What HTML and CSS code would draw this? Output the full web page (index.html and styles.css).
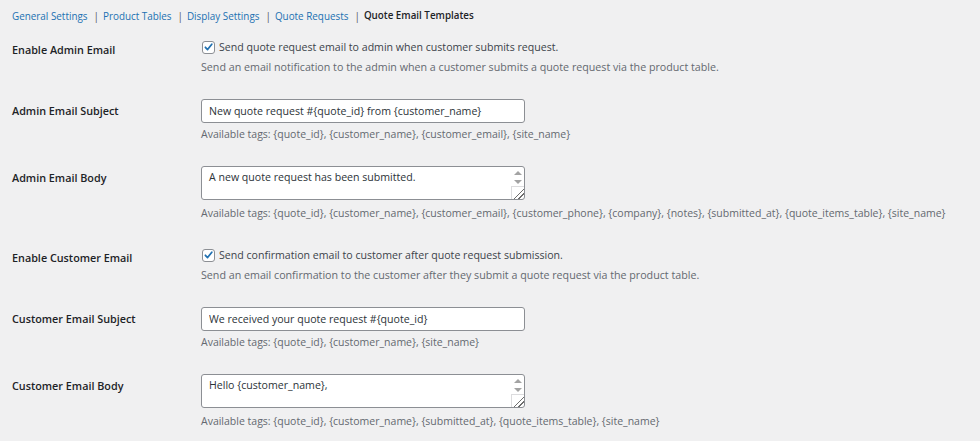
FILE: index.html
```html
<!DOCTYPE html>
<html lang="en">

<head>
    <meta charset="UTF-8">
    <meta name="viewport" content="width=device-width, initial-scale=1.0">
    <title>Quote Email Templates</title>
    <link rel="stylesheet" href="styles.css">
</head>

<body>

    <div class="wrap">
        <nav class="subnav">
            <a href="#">General Settings</a><span class="sep">|</span>
            <a href="#">Product Tables</a><span class="sep">|</span>
            <a href="#">Display Settings</a><span class="sep">|</span>
            <a href="#">Quote Requests</a><span class="sep">|</span>
            <strong>Quote Email Templates</strong>
        </nav>

        <div class="form-table">
            <div class="row check-row">
                <div class="label">Enable Admin Email</div>
                <div class="field">
                    <label class="check">
                        <span class="box">
                            <svg viewBox="0 0 12 12" width="12" height="12"><path d="M2.6 6.3 L5 8.8 L9.6 3" fill="none" stroke="#2271b1" stroke-width="1.9" stroke-linecap="round" stroke-linejoin="round"/></svg>
                        </span>
                        Send quote request email to admin when customer submits request.
                    </label>
                    <p class="description">Send an email notification to the admin when a customer submits a quote request via the product table.</p>
                </div>
            </div>

            <div class="row">
                <div class="label">Admin Email Subject</div>
                <div class="field">
                    <input type="text" class="regular-text" value="New quote request #{quote_id} from {customer_name}">
                    <p class="tags">Available tags: {quote_id}, {customer_name}, {customer_email}, {site_name}</p>
                </div>
            </div>

            <div class="row">
                <div class="label">Admin Email Body</div>
                <div class="field">
                    <div class="textarea">
                        <textarea rows="2">A new quote request has been submitted.</textarea>
                        <div class="scrollbar">
                            <span class="arrow up"></span>
                            <span class="arrow down"></span>
                            <span class="grip"></span>
                        </div>
                    </div>
                    <p class="tags tags-body">Available tags: {quote_id}, {customer_name}, {customer_email}, {customer_phone}, {company}, {notes}, {submitted_at}, {quote_items_table}, {site_name}</p>
                </div>
            </div>

            <div class="row check-row">
                <div class="label">Enable Customer Email</div>
                <div class="field">
                    <label class="check">
                        <span class="box">
                            <svg viewBox="0 0 12 12" width="12" height="12"><path d="M2.6 6.3 L5 8.8 L9.6 3" fill="none" stroke="#2271b1" stroke-width="1.9" stroke-linecap="round" stroke-linejoin="round"/></svg>
                        </span>
                        Send confirmation email to customer after quote request submission.
                    </label>
                    <p class="description">Send an email confirmation to the customer after they submit a quote request via the product table.</p>
                </div>
            </div>

            <div class="row">
                <div class="label">Customer Email Subject</div>
                <div class="field">
                    <input type="text" class="regular-text" value="We received your quote request #{quote_id}">
                    <p class="tags">Available tags: {quote_id}, {customer_name}, {site_name}</p>
                </div>
            </div>

            <div class="row">
                <div class="label">Customer Email Body</div>
                <div class="field">
                    <div class="textarea">
                        <textarea rows="2">Hello {customer_name},</textarea>
                        <div class="scrollbar">
                            <span class="arrow up"></span>
                            <span class="arrow down"></span>
                            <span class="grip"></span>
                        </div>
                    </div>
                    <p class="tags tags-body">Available tags: {quote_id}, {customer_name}, {submitted_at}, {quote_items_table}, {site_name}</p>
                </div>
            </div>
        </div>
    </div>

</body>

</html>
```

FILE: styles.css
```css
body {
    margin: 0;
    background-color: #f0f0f1;
    color: #3c434a;
    font-family: "Open Sans", sans-serif;
    font-size: 10.6px;
    line-height: 16px;
}

.wrap {
    padding: 8px 12px 0;
}

.subnav {
    display: flex;
    align-items: center;
    height: 16px;
    font-size: 9.9px;
}

.subnav a {
    color: #2271b1;
    text-decoration: none;
}

.subnav .sep {
    margin: 0 4px 0 6px;
    color: #50575e;
}

.subnav strong {
    color: #1d2327;
    font-weight: 600;
    font-size: 9.8px;
}

.form-table {
    margin-top: 15px;
}

.row {
    display: flex;
    margin-top: 24px;
}

.row:first-child {
    margin-top: 0;
}

.row + .row.check-row {
    margin-top: 26px;
}

.label {
    width: 189px;
    flex-shrink: 0;
    padding-top: 4px;
    color: #1d2327;
    font-weight: 600;
    font-size: 10.8px;
}

.check-row .label {
    padding-top: 3px;
}

.field {
    flex: 1;
}

.check {
    display: flex;
    align-items: center;
    gap: 4px;
    color: #3c434a;
}

.box {
    width: 11px;
    height: 11px;
    border: 1px solid #8c8f94;
    border-radius: 3px;
    background-color: #fff;
    display: flex;
    align-items: center;
    justify-content: center;
    margin-left: 1px;
}

.description,
.tags {
    margin: 4px 0 0;
    color: #646970;
    font-size: 10.7px;
}

.tags {
    margin-top: 3px;
    font-size: 10.5px;
}

.tags-body {
    margin-top: 5px;
}

.regular-text {
    display: block;
    box-sizing: border-box;
    width: 324px;
    height: 24px;
    margin: 0;
    padding: 0 7px;
    border: 1px solid #8c8f94;
    border-radius: 3px;
    background-color: #fff;
    color: #2c3338;
    font-family: inherit;
    font-size: 10.6px;
    outline: none;
}

.textarea {
    display: flex;
    box-sizing: border-box;
    width: 324px;
    height: 34px;
    border: 1px solid #8c8f94;
    border-radius: 3px;
    background-color: #fff;
    overflow: hidden;
}

.textarea textarea {
    flex: 1;
    margin: 0;
    padding: 2px 7px;
    border: none;
    resize: none;
    outline: none;
    overflow: hidden;
    background: transparent;
    color: #2c3338;
    font-family: inherit;
    font-size: 10.6px;
    line-height: 16px;
}

.scrollbar {
    width: 13px;
    display: flex;
    flex-direction: column;
    align-items: center;
}

.arrow {
    width: 0;
    height: 0;
    border-left: 4px solid transparent;
    border-right: 4px solid transparent;
}

.arrow.up {
    margin-top: 4px;
    border-bottom: 4px solid #a3a3a3;
}

.arrow.down {
    margin-top: 5px;
    border-top: 4px solid #a3a3a3;
}

.grip {
    margin-top: auto;
    align-self: stretch;
    height: 12px;
    border-left: 1px solid #dcdcde;
    border-top: 1px solid #dcdcde;
    background:
        linear-gradient(135deg, transparent 0 55%, #6d6d6d 55% 62%, transparent 62% 74%, #6d6d6d 74% 81%, transparent 81%);
}
```
